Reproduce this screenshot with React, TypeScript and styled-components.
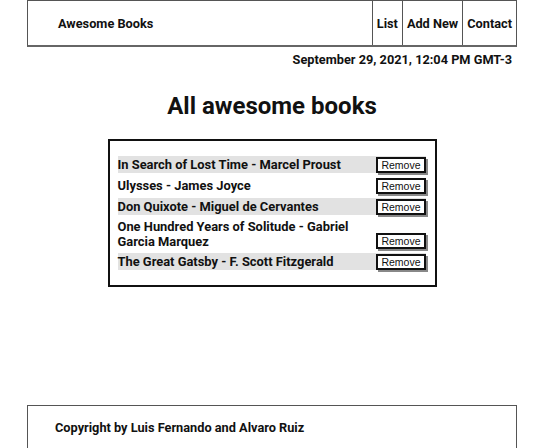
import React from "react";
import styled, { createGlobalStyle } from "styled-components";

const Global = createGlobalStyle`
  html, body { margin: 0; padding: 0; background: #fff; }
  body { font-family: Roboto, "Liberation Sans", sans-serif; color: #111; }
`;

const Page = styled.div`
  width: 544px;
  height: 448px;
  display: flex;
  flex-direction: column;
  overflow: hidden;
`;

const Header = styled.header`
  margin: 0 27px;
  height: 47px;
  box-sizing: border-box;
  border: 1px solid #555;
  border-bottom: 2px solid #666;
  display: flex;
  align-items: stretch;
  justify-content: space-between;
`;

const Brand = styled.div`
  font-size: 12.75px;
  font-weight: 700;
  padding-left: 30px;
  display: flex;
  align-items: center;
`;

const Nav = styled.nav`
  display: flex;
`;

const NavItem = styled.a`
  display: flex;
  align-items: center;
  padding: 0 4px 0 4px;
  border-left: 1px solid #555;
  font-size: 12.75px;
  font-weight: 700;
  color: #111;
  text-decoration: none;
`;

const DateLine = styled.div`
  margin: 5px 32px 0 0;
  text-align: right;
  font-size: 12.75px;
  line-height: 15px;
  font-weight: 700;
`;

const Title = styled.h1`
  margin: 24px 0 0;
  text-align: center;
  font-size: 24px;
  font-weight: 700;
  line-height: 30px;
`;

const BookBox = styled.section`
  width: 329px;
  margin: 18px auto 0;
  box-sizing: border-box;
  border: 2px solid #111;
  padding: 15px 9px 15px 8px;
  display: flex;
  flex-direction: column;
  gap: 4px;
`;

const Row = styled.div<{ $shaded: boolean }>`
  display: flex;
  align-items: flex-end;
  justify-content: space-between;
  min-height: 17px;
  background: ${(p) => (p.$shaded ? "#e2e2e2" : "transparent")};
`;

const BookTitle = styled.span`
  align-self: center;
  font-size: 12.9px;
  font-weight: 700;
  line-height: 15px;
  max-width: 250px;
`;

const RemoveBtn = styled.button`
  font-family: "Liberation Sans", Arial, sans-serif;
  font-size: 10.5px;
  line-height: 12px;
  padding: 0 3px;
  height: 16px;
  background: #fff;
  border: 2px solid #111;
  box-shadow: 2px 2px 0 #888;
  color: #111;
`;

const Spacer = styled.div`
  flex: 1;
`;

const Footer = styled.footer`
  margin: 0 27px;
  height: 43px;
  flex-shrink: 0;
  box-sizing: border-box;
  border: 1px solid #555;
  border-bottom: none;
  padding: 0 0 0 27px;
  display: flex;
  align-items: center;
  font-size: 12.75px;
  font-weight: 700;
`;

const books = [
  "In Search of Lost Time - Marcel Proust",
  "Ulysses - James Joyce",
  "Don Quixote - Miguel de Cervantes",
  "One Hundred Years of Solitude - Gabriel Garcia Marquez",
  "The Great Gatsby - F. Scott Fitzgerald",
];

export default function App() {
  return (
    <Page>
      <Global />
      <Header>
        <Brand>Awesome Books</Brand>
        <Nav>
          <NavItem href="#">List</NavItem>
          <NavItem href="#">Add New</NavItem>
          <NavItem href="#">Contact</NavItem>
        </Nav>
      </Header>
      <DateLine>September 29, 2021, 12:04 PM GMT-3</DateLine>
      <Title>All awesome books</Title>
      <BookBox>
        {books.map((b, i) => (
          <Row key={b} $shaded={i % 2 === 0}>
            <BookTitle>{b}</BookTitle>
            <RemoveBtn>Remove</RemoveBtn>
          </Row>
        ))}
      </BookBox>
      <Spacer />
      <Footer>Copyright by Luis Fernando and Alvaro Ruiz</Footer>
    </Page>
  );
}
